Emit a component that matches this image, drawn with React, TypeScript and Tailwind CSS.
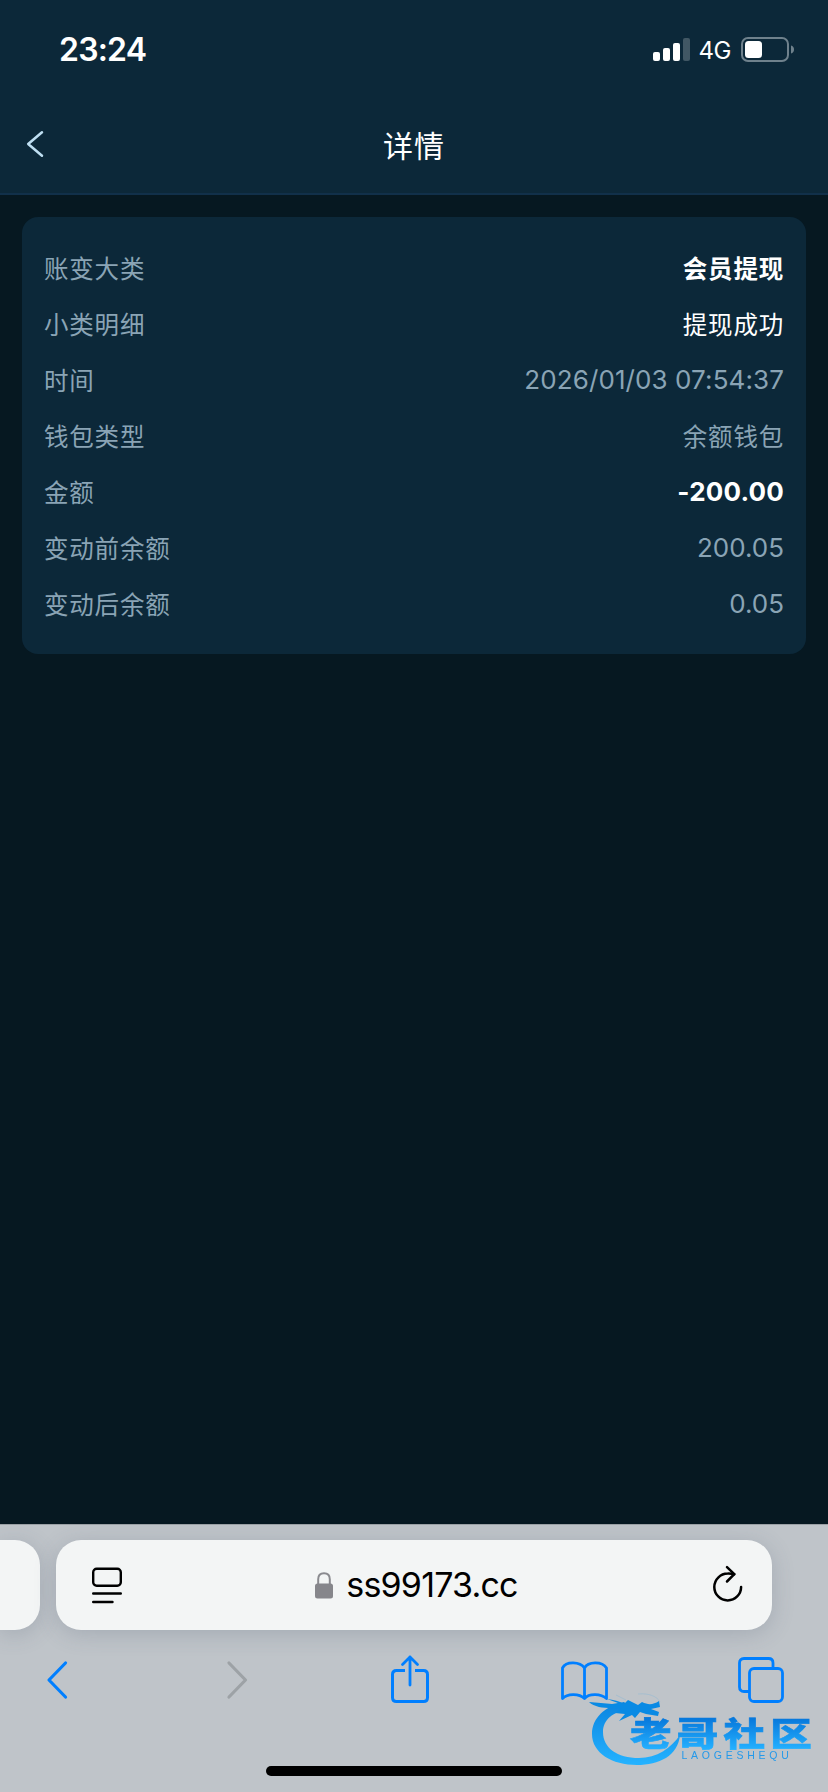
import React from "react";

const rows = [
  { label: "账变大类", value: "会员提现", style: "pt-px text-white font-bold" },
  { label: "小类明细", value: "提现成功", style: "pt-px text-white" },
  { label: "时间", value: "2026/01/03 07:54:37", style: "text-[#8aa4b5] text-[26px] tracking-[0.1px]" },
  { label: "钱包类型", value: "余额钱包", style: "pt-px text-[#8aa4b5]" },
  { label: "金额", value: "-200.00", style: "text-white font-bold text-[26px] tracking-[0.2px]" },
  { label: "变动前余额", value: "200.05", style: "text-[#8aa4b5] text-[26px] tracking-normal" },
  { label: "变动后余额", value: "0.05", style: "text-[#8aa4b5] text-[26px] tracking-normal" },
];

const StatusBar = () => (
  <div className="flex h-[100px] items-center justify-between pl-[59px] pr-[33px] text-white">
    <span className="text-[32px] leading-none font-semibold tracking-[-0.8px]">23:24</span>
    <div className="flex items-center">
      {/* Signal */}
      <svg width="37" height="24" viewBox="0 0 37 24" fill="#fff">
        <rect x="0" y="14" width="7" height="9" rx="2" />
        <rect x="10" y="10" width="7" height="13" rx="2" />
        <rect x="20" y="5" width="7" height="18" rx="2" />
        <rect x="30" y="0" width="7" height="23" rx="2" opacity="0.22" />
      </svg>
      <span className="ml-2 pt-0.5 text-[24px] leading-none tracking-[-0.4px]">4G</span>
      {/* Battery */}
      <svg className="ml-2.5" width="54" height="26" viewBox="0 0 54 26" fill="none">
        <rect x="1" y="1" width="46" height="23" rx="6" stroke="#6f818c" strokeWidth="2" />
        <rect x="4" y="4" width="17" height="17" rx="3.5" fill="#fff" />
        <path d="M50 8.500C52 9 53 10.500 53 12.500C53 14.500 52 16 50 16.500Z" fill="#6f818c" />
      </svg>
    </div>
  </div>
);

const Header = () => (
  <div className="flex h-[95px] items-start border-b-2 border-[#11304a] px-[26px]">
    <svg className="mt-[30px]" width="18" height="28" viewBox="0 0 18 28" fill="none">
      <path d="M16 2.200L2.200 14L16 25.800" stroke="#bfdff2" strokeWidth="2.500" strokeLinecap="round" strokeLinejoin="round" />
    </svg>
    <h1 className="mt-[25px] flex-1 pr-[18px] text-center text-[30px] leading-[42px] tracking-[1px] text-white">详情</h1>
  </div>
);

const AddressBar = () => (
  <div className="flex h-[90px] gap-4">
    <div className="w-10 rounded-r-[25px] bg-[#f3f5f5] shadow-[0_4px_22px_rgba(70,80,105,0.22)]" />
    <div className="flex w-[716px] items-center rounded-[25px] bg-[#f3f5f5] pl-9 pr-[29px] shadow-[0_4px_22px_rgba(70,80,105,0.22)]">
      <svg width="30" height="37" viewBox="0 0 30 37" fill="none" stroke="#000" strokeWidth="2.400" strokeLinecap="round">
        <rect x="1.200" y="1.700" width="27.600" height="17" rx="3.500" />
        <path d="M1.200 26.500H28.800M1.200 35H20.500" />
      </svg>
      <div className="flex flex-1 items-center justify-center pr-0.5">
        <svg className="mr-[13px]" width="18" height="27" viewBox="0 0 18 27" fill="none">
          <path d="M3.200 13V7.200C3.200 3.500 5.500 1.200 9 1.200C12.500 1.200 14.800 3.500 14.800 7.200V13" stroke="#8a8a8f" strokeWidth="2" />
          <rect y="11.500" width="18" height="15" rx="2.500" fill="#86868b" />
        </svg>
        <span className="text-[34px] leading-none tracking-[-0.8px] text-black">ss99173.cc</span>
      </div>
      <svg className="overflow-visible" width="30" height="37" viewBox="0 0 30 37" fill="none" stroke="#000" strokeWidth="2.500" strokeLinecap="round" strokeLinejoin="round">
        <path d="M28.100 20A13.400 13.400 0 1 1 14.700 6.600Q18 6.500 21.300 7.200" />
        <path d="M14 0.200L21.300 7.200L14 14.500" />
      </svg>
    </div>
  </div>
);

const Toolbar = () => (
  <div className="mt-6 flex h-[52px] items-center pl-[46px] text-[#007fff]">
    <svg width="22" height="40" viewBox="0 0 22 40" fill="none" stroke="currentColor" strokeWidth="3.200" strokeLinecap="round" strokeLinejoin="round">
      <path d="M19.500 3L3 20L19.500 37" />
    </svg>
    <svg className="ml-[158px]" width="22" height="40" viewBox="0 0 22 40" fill="none" stroke="#9da2a6" strokeWidth="3.200" strokeLinecap="round" strokeLinejoin="round">
      <path d="M3 3L19.500 20L3 37" />
    </svg>
    <svg className="ml-[142px]" width="40" height="50" viewBox="0 0 40 50" fill="none" stroke="currentColor" strokeWidth="3" strokeLinecap="round" strokeLinejoin="round">
      <path d="M15 15.500H6.500Q2.500 15.500 2.500 19.500V42.500Q2.500 46.500 6.500 46.500H33.500Q37.500 46.500 37.500 42.500V19.500Q37.500 15.500 33.500 15.500H25" strokeLinecap="butt" />
      <path d="M20 30V2M12.500 9.500L20 2L27.500 9.500" strokeWidth="2.800" />
    </svg>
    <svg className="mt-0.5 ml-[130px]" width="48" height="42" viewBox="0 0 48 42" fill="none" stroke="currentColor" strokeWidth="2.800" strokeLinejoin="round">
      <path d="M24.500 8C20 1.500 6 1 2.500 8V38.500C7 33.500 19 33 24.500 38.500C29 33 41 33.500 46.500 38.500V8C42 1 28 1.500 24.500 8V38.500" />
    </svg>
    <svg className="ml-[130px]" width="46" height="46" viewBox="0 0 46 46" fill="none" stroke="currentColor" strokeWidth="2.800">
      <path d="M11 34.500H6Q1.500 34.500 1.500 30V6Q1.500 1.500 6 1.500H30.500Q35 1.500 35 6V11" />
      <rect x="11.500" y="11.500" width="33" height="33" rx="4.500" />
    </svg>
  </div>
);

const Watermark = () => (
  <svg className="absolute left-[588px] top-[1688px] blur-[0.5px]" width="230" height="82" viewBox="0 0 230 82">
    <defs>
      <linearGradient id="ring" x1="0" y1="8" x2="0" y2="76" gradientUnits="userSpaceOnUse">
        <stop offset="0" stopColor="#087fdc" />
        <stop offset="1" stopColor="#24b2ff" />
      </linearGradient>
      <linearGradient id="word" x1="0" y1="31" x2="0" y2="61" gradientUnits="userSpaceOnUse">
        <stop offset="0" stopColor="#0879dc" />
        <stop offset="1" stopColor="#24b0ff" />
      </linearGradient>
    </defs>
    {/* Dragon body */}
    <path d="M36 14C17 18 4 30 4 46C4 65 24 77 49 77C71 77 90 68 92 47C83 60 69 70 51 70C29 70 15 60 15 44C15 32 24 24 43 20Z" fill="url(#ring)" />
    {/* Dragon head and whiskers */}
    <path d="M1 14C9 15 17 15 24 16L30 15L19 11C26 12 31 13 36 16L40 12L50 17L54 14C60 17 65 17 71 13L72 19L63 21L71 24L70 28L58 26L52 24L47 30L44 27L31 33L37 26L27 25L34 20L24 20C15 20 6 19 1 14Z" fill="#098ae4" />
    <path d="M28 7L38 12M50 6C60 5 69 8 72 14" stroke="#6fb2dc" strokeWidth="0.600" fill="none" opacity="0.500" />
    <text
      transform="translate(42 0) scale(1.260 1)"
      x="0"
      y="58"
      fill="url(#word)"
      stroke="url(#word)"
      strokeWidth="0.600"
      className="font-['Noto_Sans_CJK_SC',sans-serif] text-[33px] font-black tracking-[4.100px]"
    >
      老哥社区
    </text>
    <text x="93.500" y="71" fill="#2499ea" className="font-['Liberation_Sans',sans-serif] text-[10.500px] tracking-[3.750px]">
      LAOGESHEQU
    </text>
  </svg>
);

const App = () => {
  return (
    <div className="relative flex h-[1792px] w-[828px] flex-col overflow-hidden bg-[#061821] font-['Inter','Noto_Sans_CJK_SC',sans-serif]">
      <div className="bg-[#0c2839]">
        <StatusBar />
        <Header />
      </div>

      {/* Record details */}
      <main className="flex-1 px-[22px] pt-[22px]">
        <div className="rounded-2xl bg-[#0c2839] px-[22px] pt-[23px] pb-[22px]">
          {rows.map((row) => (
            <div key={row.label} className="flex h-14 items-center justify-between text-[24.5px] leading-9 tracking-[0.8px]">
              <span className="pt-px text-[#8aa4b5]">{row.label}</span>
              <span className={row.style}>{row.value}</span>
            </div>
          ))}
        </div>
      </main>

      {/* Browser chrome */}
      <footer className="flex h-[268px] flex-col border-t border-[#9aa0a5] bg-[#bfc4c9] pt-[15px]">
        <AddressBar />
        <Toolbar />
        <div className="mx-auto mt-[60px] h-2.5 w-[296px] rounded-full bg-black" />
      </footer>

      <Watermark />
    </div>
  );
};

export default App;
